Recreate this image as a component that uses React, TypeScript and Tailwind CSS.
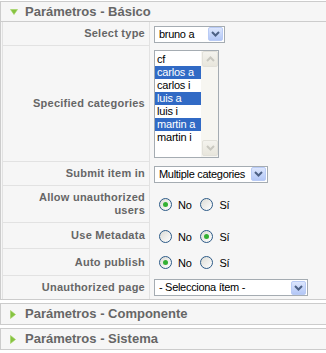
import React from "react";

const font = { fontFamily: '"Liberation Sans", Arial, sans-serif' };

function DownArrow() {
  return (
    <svg width="8" height="6" viewBox="0 0 8 6" className="block">
      <polygon points="0.5,0.5 7.5,0.5 4,5.5" fill="#86c341" stroke="#9fd45c" strokeWidth="0.6" />
    </svg>
  );
}

function RightArrow() {
  return (
    <svg width="6" height="9" viewBox="0 0 6 9" className="block">
      <polygon points="0.5,0.5 5.5,4.5 0.5,8.5" fill="#86c341" stroke="#9fd45c" strokeWidth="0.6" />
    </svg>
  );
}

function DropButton() {
  return (
    <div className="flex h-[14px] w-[15px] shrink-0 items-center justify-center rounded-[2px] border border-[#b9cbf5] bg-gradient-to-b from-[#dce6fd] to-[#b3c7f6]">
      <svg width="9" height="6" viewBox="0 0 9 6">
        <polyline points="1,1 4.5,4.5 8,1" fill="none" stroke="#4d6185" strokeWidth="2" />
      </svg>
    </div>
  );
}

function Select({ text, width }: { text: string; width: string }) {
  return (
    <div className={`flex h-[17px] ${width} items-center justify-between border border-[#a5acb2] bg-white pr-[1px]`}>
      <span className="whitespace-nowrap pl-[4px] text-[11px] leading-none tracking-[-0.3px] text-black">{text}</span>
      <DropButton />
    </div>
  );
}

function ScrollButton({ up }: { up?: boolean }) {
  return (
    <div className="flex h-[16px] w-[16px] items-center justify-center rounded-[2px] border border-[#e2e1da] bg-gradient-to-b from-[#f4f3ee] to-[#e8e6dc]">
      <svg width="9" height="6" viewBox="0 0 9 6">
        <polyline points={up ? "1,5 4.5,1.5 8,5" : "1,1 4.5,4.5 8,1"} fill="none" stroke="#c9c8c0" strokeWidth="2" />
      </svg>
    </div>
  );
}

function Radio({ checked }: { checked?: boolean }) {
  return (
    <div className="flex h-[13px] w-[13px] items-center justify-center rounded-full border border-[#2c5a87] bg-gradient-to-br from-[#dcdcd6] to-white">
      {checked && <div className="h-[5px] w-[5px] rounded-full bg-[#33b033]" />}
    </div>
  );
}

function RadioPair({ yes }: { yes?: boolean }) {
  return (
    <div className="flex items-center pl-[5px] text-[11px] tracking-[-0.3px] text-black">
      <Radio checked={!yes} />
      <span className="ml-[6px] mt-[2px]">No</span>
      <div className="ml-[9px]">
        <Radio checked={yes} />
      </div>
      <span className="ml-[6px] mt-[2px]">Sí</span>
    </div>
  );
}

function Row({
  label,
  height,
  last,
  children,
}: {
  label: React.ReactNode;
  height: string;
  last?: boolean;
  children: React.ReactNode;
}) {
  return (
    <div className={`flex ${height}`}>
      <div
        className={`flex w-[148px] shrink-0 items-center justify-end border-l border-r border-[#e2e2e2] pr-[4px] text-right text-[11px] font-bold leading-[13px] tracking-[0.25px] text-[#666] ${
          last ? "" : "border-b"
        }`}
      >
        {label}
      </div>
      <div className="flex flex-1 items-center pl-[4px]">{children}</div>
    </div>
  );
}

const items = [
  { name: "cf", sel: false },
  { name: "carlos a", sel: true },
  { name: "carlos i", sel: false },
  { name: "luis a", sel: true },
  { name: "luis i", sel: false },
  { name: "martin a", sel: true },
  { name: "martin i", sel: false },
];

function ListBox() {
  return (
    <div className="flex h-[108px] w-[65px] border border-[#a5acb2] bg-white">
      <div className="w-[46px] pt-[2px] text-[11px] tracking-[-0.2px] text-black">
        {items.map((it) => (
          <div
            key={it.name}
            className={`h-[13px] whitespace-nowrap pl-[2px] leading-[13px] ${it.sel ? "bg-[#316ac5] text-white" : ""}`}
          >
            {it.name}
          </div>
        ))}
      </div>
      <div className="flex w-[17px] flex-col justify-between bg-[#f7f6f1] pl-[1px] pb-[1px]">
        <ScrollButton up />
        <ScrollButton />
      </div>
    </div>
  );
}

function Header({ title, open }: { title: string; open?: boolean }) {
  return (
    <div className={`flex h-[20px] items-center bg-[#f6f6f6] ${open ? "border-b border-[#ccc]" : ""}`}>
      <div className="flex w-[24px] shrink-0 pl-[9px]">
        {open ? <DownArrow /> : <RightArrow />}
      </div>
      <span className="text-[13px] font-bold text-[#666]">{title}</span>
    </div>
  );
}

export default function App() {
  return (
    <div className="h-[353px] w-[326px] overflow-hidden bg-white" style={font}>
      <div className="mt-[1px] w-[330px] border border-[#ccc] bg-[#f6f6f6]">
        <Header title="Parámetros - Básico" open />
        <div className="pl-[1px]">
          <Row label="Select type" height="h-[24px]">
            <Select text="bruno a" width="w-[71px]" />
          </Row>
          <Row label="Specified categories" height="h-[116px]">
            <ListBox />
          </Row>
          <Row label="Submit item in" height="h-[24px]">
            <Select text="Multiple categories" width="w-[114px]" />
          </Row>
          <Row
            label={
              <span>
                Allow unauthorized
                <br />
                users
              </span>
            }
            height="h-[37px]"
          >
            <RadioPair />
          </Row>
          <Row label="Use Metadata" height="h-[26px]">
            <RadioPair yes />
          </Row>
          <Row label="Auto publish" height="h-[27px]">
            <RadioPair />
          </Row>
          <Row label="Unauthorized page" height="h-[23px]" last>
            <Select text="- Selecciona ítem -" width="w-[154px]" />
          </Row>
        </div>
      </div>
      <div className="mt-[3px] w-[330px] border border-[#ccc]">
        <Header title="Parámetros - Componente" />
      </div>
      <div className="mt-[3px] w-[330px] border border-[#ccc]">
        <Header title="Parámetros - Sistema" />
      </div>
    </div>
  );
}
